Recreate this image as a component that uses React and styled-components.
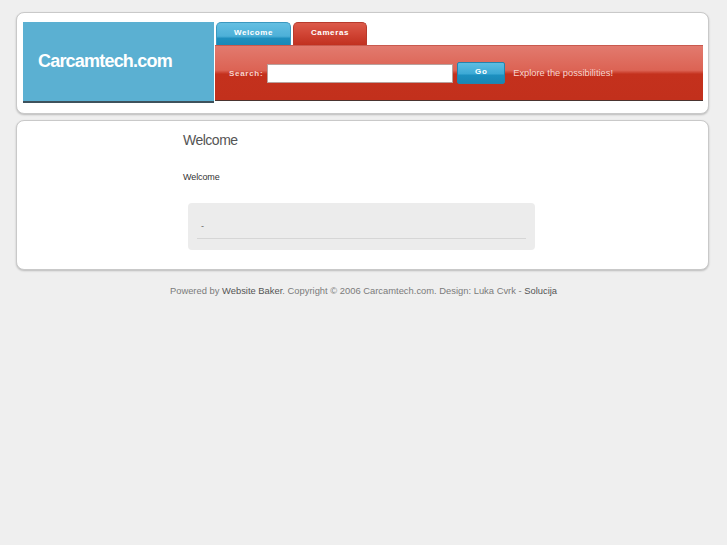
import React from 'react';
import styled, { createGlobalStyle } from 'styled-components';

const GlobalStyle = createGlobalStyle`
  body {
    margin: 0;
    background: #efefef;
    font-family: "Liberation Sans", Arial, sans-serif;
  }
`;

const Page = styled.div`
  width: 693px;
  padding: 12px 0 0 16px;
`;

const Panel = styled.div`
  background: #fff;
  border: 1px solid #c9c9c9;
  border-radius: 8px;
  box-shadow: 0 1px 2px rgba(0, 0, 0, 0.22);
  box-sizing: border-box;
`;

const Header = styled(Panel)`
  display: flex;
  height: 102px;
  padding: 9px 5px 0 6px;
`;

const Logo = styled.div`
  width: 191px;
  height: 81px;
  box-sizing: border-box;
  background: #5bb0d2;
  border-bottom: 2px solid #3e525c;
  display: flex;
  align-items: center;
  padding-left: 15px;
  margin-right: 1px;
`;

const LogoText = styled.h1`
  margin: 0;
  color: #fff;
  font-size: 18px;
  font-weight: bold;
  letter-spacing: -0.8px;
`;

const NavColumn = styled.div`
  flex: 1;
  display: flex;
  flex-direction: column;
`;

const Tabs = styled.div`
  display: flex;
  gap: 2px;
  height: 23px;
  padding-left: 1px;
`;

const Tab = styled.a`
  width: ${(p) => p.$w}px;
  box-sizing: border-box;
  border-radius: 5px 5px 0 0;
  border: 1px solid ${(p) => (p.$red ? '#b83a2c' : '#3a98c0')};
  border-bottom: none;
  background: ${(p) =>
    p.$red
      ? 'linear-gradient(#dc5a4a, #d04434 50%, #c1301f 100%)'
      : 'linear-gradient(#64bfe2, #4db0d8 60%, #1f8fbe 70%, #1a88b6)'};
  color: #fff;
  font-size: 8px;
  font-weight: bold;
  letter-spacing: 0.6px;
  text-align: center;
  text-decoration: none;
  padding-bottom: 4px;
  line-height: 19px;
`;

const SearchBar = styled.div`
  height: 56px;
  display: flex;
  align-items: center;
  padding-left: 14px;
  background: linear-gradient(#e27a6e, #dc6354 45%, #c4311d 52%, #c2301c);
  border-top: 1px solid #c95a4e;
  border-bottom: 1px solid #4a3430;
  box-sizing: border-box;
`;

const Label = styled.label`
  color: #f6d3cc;
  font-size: 8px;
  font-weight: bold;
  letter-spacing: 0.7px;
  margin-right: 4px;
`;

const Input = styled.input`
  width: 186px;
  height: 19px;
  box-sizing: border-box;
  border: 1px solid #b9a09c;
  background: #fff;
  padding: 0 3px;
  margin-right: 4px;
`;

const GoButton = styled.button`
  width: 48px;
  height: 22px;
  border: 1px solid #2483ad;
  border-radius: 2px;
  background: linear-gradient(#5dbde2, #3ba9d5 55%, #1c90c0 60%, #1a86b4);
  color: #fff;
  font-family: "Liberation Sans", Arial, sans-serif;
  font-size: 8px;
  font-weight: bold;
  letter-spacing: 0.8px;
  padding: 0 0 4px;
  margin-right: 8px;
`;

const Slogan = styled.span`
  color: #f7d6cf;
  font-size: 9.3px;
`;

const Content = styled(Panel)`
  margin-top: 6px;
  height: 150px;
  padding: 11px 0 0 166px;
`;

const Heading = styled.h2`
  margin: 0;
  font-size: 14px;
  font-weight: normal;
  color: #555;
  letter-spacing: -0.5px;
`;

const Para = styled.p`
  margin: 24px 0 0;
  font-size: 9px;
  color: #333;
  letter-spacing: -0.1px;
`;

const NewsBox = styled.div`
  width: 347px;
  height: 47px;
  box-sizing: border-box;
  margin: 21px 0 0 5px;
  background: #ececec;
  border-radius: 4px;
  padding: 17px 9px 0 9px;
`;

const NewsItem = styled.div`
  font-size: 9px;
  color: #666;
  padding: 0 0 6px 4px;
  border-bottom: 1px solid #d6d6d6;
  line-height: 12px;
`;

const Footer = styled.div`
  width: 727px;
  margin-left: -16px;
  text-align: center;
  padding-top: 15px;
  font-size: 9.4px;
  color: #7b7b7b;
`;

const FooterLink = styled.a`
  color: #555;
  text-decoration: none;
  border-bottom: 1px dotted #555;
  padding-bottom: 2px;
`;

export default function App() {
  return (
    <>
      <GlobalStyle />
      <Page>
        <Header>
          <Logo>
            <LogoText>Carcamtech.com</LogoText>
          </Logo>
          <NavColumn>
            <Tabs>
              <Tab $w={75}>Welcome</Tab>
              <Tab $w={74} $red>
                Cameras
              </Tab>
            </Tabs>
            <SearchBar>
              <Label>Search:</Label>
              <Input type="text" />
              <GoButton>Go</GoButton>
              <Slogan>Explore the possibilities!</Slogan>
            </SearchBar>
          </NavColumn>
        </Header>
        <Content>
          <Heading>Welcome</Heading>
          <Para>Welcome</Para>
          <NewsBox>
            <NewsItem>-</NewsItem>
          </NewsBox>
        </Content>
        <Footer>
          Powered by <FooterLink>Website Baker</FooterLink>. Copyright © 2006 Carcamtech.com. Design: Luka Cvrk -{' '}
          <FooterLink>Solucija</FooterLink>
        </Footer>
      </Page>
    </>
  );
}
